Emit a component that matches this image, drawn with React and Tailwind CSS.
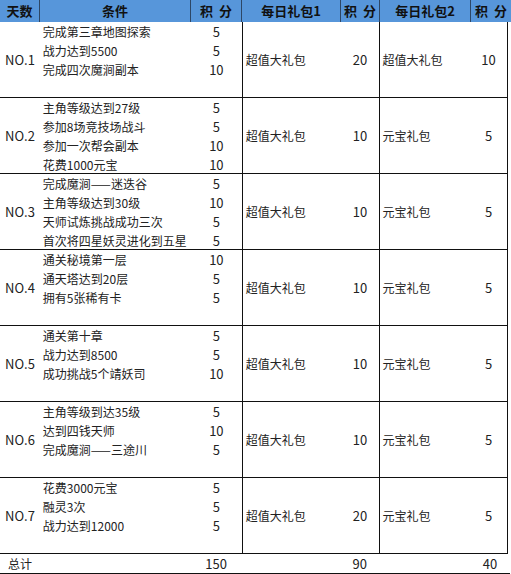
const rows = [
  {
    day: "NO.1",
    tasks: [
      ["完成第三章地图探索", 5],
      ["战力达到5500", 5],
      ["完成四次魔涧副本", 10],
    ],
    gift1: "超值大礼包",
    score1: 20,
    gift2: "超值大礼包",
    score2: 10,
  },
  {
    day: "NO.2",
    tasks: [
      ["主角等级达到27级", 5],
      ["参加8场竞技场战斗", 5],
      ["参加一次帮会副本", 10],
      ["花费1000元宝", 10],
    ],
    gift1: "超值大礼包",
    score1: 10,
    gift2: "元宝礼包",
    score2: 5,
  },
  {
    day: "NO.3",
    tasks: [
      ["完成魔涧——迷迭谷", 5],
      ["主角等级达到30级", 10],
      ["天师试炼挑战成功三次", 5],
      ["首次将四星妖灵进化到五星", 5],
    ],
    gift1: "超值大礼包",
    score1: 10,
    gift2: "元宝礼包",
    score2: 5,
  },
  {
    day: "NO.4",
    tasks: [
      ["通关秘境第一层", 10],
      ["通天塔达到20层", 5],
      ["拥有5张稀有卡", 5],
    ],
    gift1: "超值大礼包",
    score1: 10,
    gift2: "元宝礼包",
    score2: 5,
  },
  {
    day: "NO.5",
    tasks: [
      ["通关第十章", 5],
      ["战力达到8500", 5],
      ["成功挑战5个靖妖司", 10],
    ],
    gift1: "超值大礼包",
    score1: 10,
    gift2: "元宝礼包",
    score2: 5,
  },
  {
    day: "NO.6",
    tasks: [
      ["主角等级到达35级", 5],
      ["达到四钱天师", 10],
      ["完成魔涧——三途川", 5],
    ],
    gift1: "超值大礼包",
    score1: 10,
    gift2: "元宝礼包",
    score2: 5,
  },
  {
    day: "NO.7",
    tasks: [
      ["花费3000元宝", 5],
      ["融灵3次", 5],
      ["战力达到12000", 5],
    ],
    gift1: "超值大礼包",
    score1: 20,
    gift2: "元宝礼包",
    score2: 5,
  },
];

const HeadCell = ({ w, children, last }) => (
  <div
    className={`${w} h-full flex items-center justify-center ${last ? "" : "border-r border-[#2d4766]"}`}
  >
    {children}
  </div>
);

export default function App() {
  return (
    <div className="w-[511px] h-[574px] bg-white text-[#222] text-[12px] font-['Noto_Sans_CJK_SC','Microsoft_YaHei',sans-serif] overflow-hidden">
      {/* header */}
      <div className="flex h-[22px] bg-[#5796da] text-[13px] font-bold text-[#111]">
        <HeadCell w="w-[40px]">天数</HeadCell>
        <HeadCell w="w-[151px]">条件</HeadCell>
        <HeadCell w="w-[51px]">积&nbsp;&nbsp;分</HeadCell>
        <HeadCell w="w-[99px]">每日礼包1</HeadCell>
        <HeadCell w="w-[39px]">积&nbsp;&nbsp;分</HeadCell>
        <HeadCell w="w-[91px]">每日礼包2</HeadCell>
        <HeadCell w="w-[40px]" last>积&nbsp;&nbsp;分</HeadCell>
      </div>

      {rows.map((r) => (
        <div key={r.day} className="flex h-[76px] border-b border-[#111] w-[508px]">
          <div className="w-[40px] flex items-center justify-center text-[13px]">{r.day}</div>
          <div className="w-[202px] flex flex-col">
            {r.tasks.map(([t, s]) => (
              <div key={t} className="flex h-[19px] leading-[19px]">
                <div className="w-[151px] pl-[3px] whitespace-nowrap">{t}</div>
                <div className="w-[51px] text-center text-[13px]">{s}</div>
              </div>
            ))}
          </div>
          <div className="w-[99px] border-l border-[#111] flex items-center pl-[3px]">{r.gift1}</div>
          <div className="w-[39px] flex items-center justify-center text-[13px]">{r.score1}</div>
          <div className="w-[91px] border-l border-[#111] flex items-center pl-[2px]">{r.gift2}</div>
          <div className="w-[38px] border-r border-[#111] flex items-center justify-center text-[13px]">{r.score2}</div>
        </div>
      ))}

      {/* total */}
      <div className="flex h-[20px] border-b border-[#111] w-[510px] items-center leading-[19px]">
        <div className="w-[191px] pl-[8px]">总计</div>
        <div className="w-[51px] text-center text-[13px]">150</div>
        <div className="w-[99px]"></div>
        <div className="w-[39px] text-center text-[13px]">90</div>
        <div className="w-[91px]"></div>
        <div className="w-[40px] text-center text-[13px]">40</div>
      </div>
    </div>
  );
}
